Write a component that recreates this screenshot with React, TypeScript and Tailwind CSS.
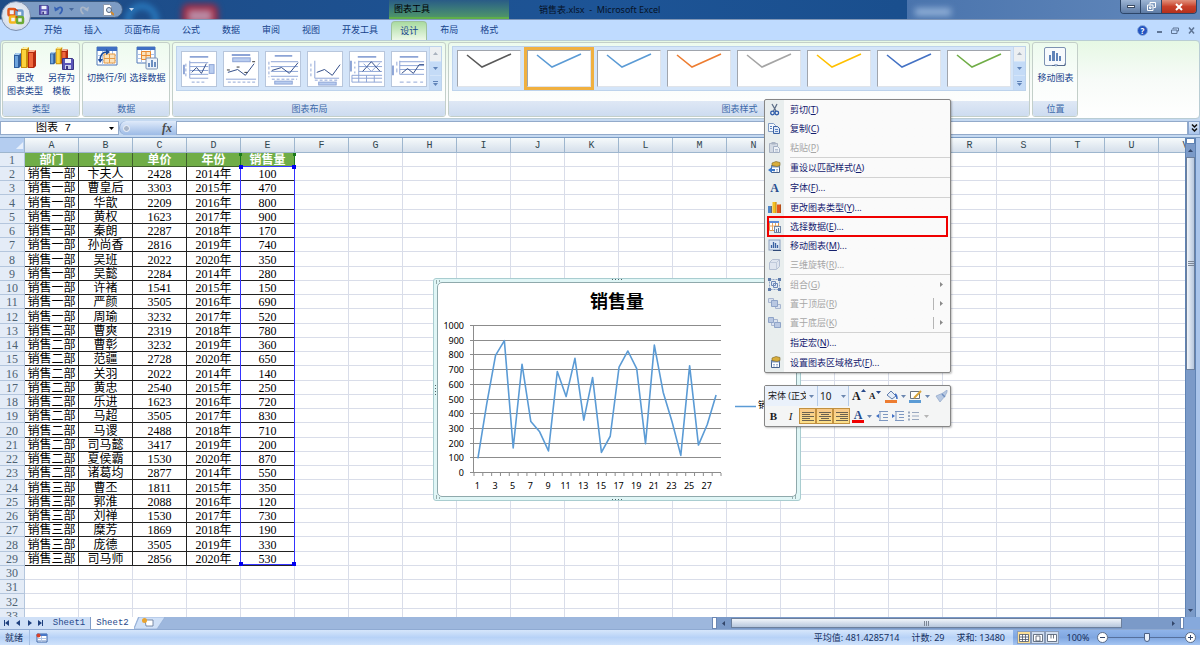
import { Fragment } from "react";
import type { ReactNode } from "react";

const uiFont = "font-['Noto_Sans','Noto_Sans_CJK_SC',sans-serif]";

const tabs = ["开始", "插入", "页面布局", "公式", "数据", "审阅", "视图", "开发工具", "设计", "布局", "格式"];

const columns = "ABCDEFGHIJKLMNOPQRSTUV".split("");

const header = ["部门", "姓名", "单价", "年份", "销售量"];

const records: [string, string, number, number, number][] = [
  ["销售一部", "卞夫人", 2428, 2014, 100],
  ["销售一部", "曹皇后", 3303, 2015, 470],
  ["销售一部", "华歆", 2209, 2016, 800],
  ["销售一部", "黄权", 1623, 2017, 900],
  ["销售一部", "秦朗", 2287, 2018, 170],
  ["销售一部", "孙尚香", 2816, 2019, 740],
  ["销售一部", "吴班", 2022, 2020, 350],
  ["销售一部", "吴懿", 2284, 2014, 280],
  ["销售一部", "许褚", 1541, 2015, 150],
  ["销售一部", "严颜", 3505, 2016, 690],
  ["销售一部", "周瑜", 3232, 2017, 520],
  ["销售二部", "曹爽", 2319, 2018, 780],
  ["销售二部", "曹彰", 3232, 2019, 360],
  ["销售二部", "范疆", 2728, 2020, 650],
  ["销售二部", "关羽", 2022, 2014, 140],
  ["销售二部", "黄忠", 2540, 2015, 250],
  ["销售二部", "乐进", 1623, 2016, 720],
  ["销售二部", "马超", 3505, 2017, 830],
  ["销售二部", "马谡", 2488, 2018, 710],
  ["销售二部", "司马懿", 3417, 2019, 200],
  ["销售二部", "夏侯霸", 1530, 2020, 870],
  ["销售二部", "诸葛均", 2877, 2014, 550],
  ["销售三部", "曹丕", 1811, 2015, 350],
  ["销售三部", "郭淮", 2088, 2016, 120],
  ["销售三部", "刘禅", 1530, 2017, 730],
  ["销售三部", "糜芳", 1869, 2018, 190],
  ["销售三部", "庞德", 3505, 2019, 330],
  ["销售三部", "司马师", 2856, 2020, 530],
];

const rowNumbers = Array.from({ length: 33 }, (_, i) => i + 1);

const styleColors = ["#595959", "#5b9bd5", "#5b9bd5", "#ed7d31", "#a5a5a5", "#ffc000", "#4472c4", "#70ad47"];

/* ---------- icons ---------- */

function BarsIcon({ className }: { className: string }) {
  return (
    <svg viewBox="0 0 22 24" className={className}>
      <path d="M0 9l2-2h5v13l-2 2H0z" fill="#2f5f9e" />
      <path d="M1 10h3v11H1z" fill="#6ea4dc" />
      <path d="M0 9l2-2h5L5 9z" fill="#a9cdf0" />
      <path d="M7 3l3-2h5v19l-2 2H7z" fill="#c98f0c" />
      <path d="M8 4h4v17H8z" fill="#fbd33c" />
      <path d="M7 3l3-2h5l-2 2z" fill="#fff0a0" />
      <path d="M14 6l2-2h6v16l-2 2h-6z" fill="#b32a10" />
      <path d="M15 7h4v14h-4z" fill="#f0683c" />
      <path d="M14 6l2-2h6l-2 2z" fill="#ffb190" />
    </svg>
  );
}

function FloppyIcon({ className }: { className: string }) {
  return (
    <svg viewBox="0 0 12 12" className={className}>
      <path d="M.5.5h10l1 1v10H.5z" fill="#5a55b8" stroke="#3b3684" />
      <path d="M3 1h6v4H3z" fill="#eef1fb" />
      <path d="M3 7h6v4H3z" fill="#c9cdea" />
      <path d="M4 8h2v3H4z" fill="#3b3684" />
    </svg>
  );
}

function SaveTemplateIcon({ className }: { className: string }) {
  return (
    <span className={`relative block ${className}`}>
      <BarsIcon className="h-5 w-[18px]" />
      <FloppyIcon className="absolute right-0 bottom-0 size-3" />
    </span>
  );
}

function GridSheet() {
  return (
    <>
      <path d="M1 1h20v18H1z" fill="#fff" stroke="#5078b8" />
      <path d="M1 1h20v4H1z" fill="#3f6fc4" />
      <path d="M1 9.500h20M1 14.500h20M6.500 5v14M11.500 5v14M16.500 5v14" stroke="#a9c2e8" />
    </>
  );
}

function SwitchIcon({ className }: { className: string }) {
  return (
    <svg viewBox="0 0 22 24" className={className}>
      <GridSheet />
      <path d="M8 8h11v9H8z" fill="#fbe3bd" stroke="#e59a45" />
      <path d="M8 12.500h11M13.500 8v9" stroke="#e59a45" />
      <path d="M4 15c0-6 2-9 7-9" fill="none" stroke="#1e4c9c" strokeWidth="1.500" />
      <path d="M2 13l2 4 3-4zM10 3l4 3-4 3z" fill="#1e4c9c" />
    </svg>
  );
}

function SelectDataIcon({ className }: { className: string }) {
  return (
    <svg viewBox="0 0 22 24" className={className}>
      <path d="M1 1h18v16H1z" fill="#fff" stroke="#5078b8" />
      <path d="M1 1h18v3H1z" fill="#3f6fc4" />
      <path d="M1 8.500h18M1 12.500h18M5.500 4v13M14.500 4v13" stroke="#a9c2e8" />
      <path d="M5.500 5.500h9v8h-9zM5.500 9.500h9M10 5.500v8" fill="#fbe3bd" stroke="#e98a30" />
      <rect x="10" y="12" width="11.500" height="11" rx="1" fill="#eef4fb" stroke="#7d92b2" />
      <path d="M12 17h2v4h-2zM15 14h2v7h-2zM18 16h2v5h-2z" fill="#6d8fc0" />
    </svg>
  );
}

function MoveChartIcon({ className }: { className: string }) {
  return (
    <svg viewBox="0 0 22 24" className={className}>
      <rect x=".5" y="1.500" width="21" height="18" rx="1.500" fill="#f7fafd" stroke="#7d92b2" />
      <path d="M5 9h2v6H5zM8 5h3v10H8zM12 7h2v8h-2zM15 10h2v5h-2z" fill="#5f83b8" />
      <path d="M8 19.500h13v-2" fill="none" stroke="#53698c" />
      <path d="M10 18l2 3 2-3" fill="#9db3d2" />
    </svg>
  );
}

function OfficeLogo() {
  return (
    <svg viewBox="0 0 20 20" className="size-5" fill="none" strokeWidth="2.500">
      <rect x="2.500" y="3" width="6.500" height="6.500" rx="1" stroke="#e2571c" />
      <rect x="10.500" y="4.500" width="6" height="6" rx="1" stroke="#6f9ccb" />
      <rect x="4" y="10.500" width="6" height="6" rx="1" stroke="#f5b61d" />
      <rect x="11" y="11" width="6" height="6" rx="1" stroke="#6caa35" />
      <path d="M9 3l3 2M9.500 11h2" stroke="#c43c12" strokeWidth="1.500" />
    </svg>
  );
}

function UndoIcon({ color, flip }: { color: string; flip?: boolean }) {
  return (
    <svg viewBox="0 0 10 10" className={flip ? "size-[10px] -scale-x-100" : "size-[10px]"}>
      <path d="M2.500 4.500C5 1 9 2 8 5.500 7.500 7.500 6.500 8.500 5.500 9" fill="none" stroke={color} strokeWidth="1.800" />
      <path d="M0 1.500l1 5 4-2z" fill={color} />
    </svg>
  );
}

function Caret({ className = "text-[#6b87b0]" }: { className?: string }) {
  return (
    <svg viewBox="0 0 5 3" className={`h-[3px] w-[5px] shrink-0 ${className}`}>
      <path d="M0 0h5L2.500 3z" fill="currentColor" />
    </svg>
  );
}

function PropertiesIcon({ arrow }: { arrow?: boolean }) {
  return (
    <>
      <path d="M3.500 4.500h8v7h-8z" fill="#fff" stroke="#47628c" />
      <path d="M3.500 4.500h8v2h-8z" fill="#7f9cc8" />
      <path d="M4 2l4-1.500 4 1v3l-3 1-5-1z" fill="#d9ae3c" stroke="#7a6424" strokeWidth=".600" />
      <path d="M5 8.500h2M8 8.500h2M5 10h2M8 10h2" stroke="#8aa2c6" strokeWidth=".800" />
      {arrow && <path d="M0 9l4-3v2h3v2H4v2z" fill="#3c78c8" />}
    </>
  );
}

const menuIcons: Record<string, ReactNode> = {
  cut: (
    <>
      <path d="M4 1l4 7M9 1L5.500 8" stroke="#5e6f88" strokeWidth="1.300" />
      <circle cx="4.500" cy="10" r="1.800" fill="none" stroke="#2c5aa8" strokeWidth="1.300" />
      <circle cx="8.800" cy="10" r="1.800" fill="none" stroke="#2c5aa8" strokeWidth="1.300" />
    </>
  ),
  copy: (
    <>
      <path d="M.5 1.500h5l2 2v6h-7z" fill="#f3f7fc" stroke="#7f9bc4" />
      <path d="M5.500 4.500h4l2 2v5h-6z" fill="#dfe9f7" stroke="#3a62a4" />
      <path d="M7 7.500h3M7 9.500h3M2 4.500h2M2 6.500h2" stroke="#5a82c0" />
    </>
  ),
  paste: (
    <>
      <path d="M1.500 2.500h8v9h-8z" fill="#d3dae4" stroke="#aab4c4" />
      <path d="M3.500 1h4v2.500h-4z" fill="#aab4c4" />
      <path d="M5.500 5.500h4l2 2v4h-6z" fill="#eef2f7" stroke="#a3b0c4" />
      <path d="M7 8.500h3M7 10h3" stroke="#b4c0d2" />
    </>
  ),
  reset: <PropertiesIcon arrow />,
  font: (
    <text x="6.500" y="10.500" textAnchor="middle" fontSize="12" fontWeight="bold" fontFamily="Liberation Serif" fill="#274f8f">
      A
    </text>
  ),
  bars: (
    <>
      <path d="M0 5h4v7H0z" fill="#4f86c8" />
      <path d="M4.500 1h4v11h-4z" fill="#f5bf22" />
      <path d="M9 3.500h4V12H9z" fill="#e2551f" />
      <path d="M3 5h1v7H3zM7.500 1h1v11h-1zM12 3.500h1V12h-1z" fill="#8a4a12" opacity=".5" />
    </>
  ),
  select: (
    <>
      <path d="M1.500 1.500h9v9h-9z" fill="#fff" stroke="#e0954c" />
      <path d="M1 1h10v2H1z" fill="#5a8ad8" />
      <path d="M1.500 6h9M4.500 3v8M7.500 3v8" stroke="#e9a663" />
      <rect x="6.500" y="6.500" width="6" height="6" fill="#e8eff8" stroke="#7186a6" />
      <path d="M8.500 9v3M10.500 8v4" stroke="#56739e" />
    </>
  ),
  move: (
    <>
      <rect x="1" y="1" width="11" height="10" fill="#dfe8f4" stroke="#8ba0c0" />
      <path d="M3.500 6v3M5.500 3v6M7.500 4v5M9.500 6v3" stroke="#3c62a2" strokeWidth="1.300" />
      <path d="M5 11.500h8" stroke="#2f4a78" />
    </>
  ),
  cube: (
    <>
      <path d="M1.500 4.500l3-3h7v7l-3 3h-7z" fill="#dfe5ef" stroke="#b4bfd3" />
      <path d="M1.500 4.500h7v7M8.500 4.500l3-3" fill="none" stroke="#c0cadb" />
    </>
  ),
  group: (
    <>
      <path d="M1.500 1.500h10v10h-10z" fill="none" stroke="#8fa4c6" strokeDasharray="2 1" />
      <path d="M3.500 3.500h4v4h-4zM5.500 5.500h4v4h-4z" fill="#e0e8f4" stroke="#6f8ab8" />
      <path d="M0 0h3v3H0zM10 0h3v3h-3zM0 10h3v3H0zM10 10h3v3h-3z" fill="#5f7cac" />
    </>
  ),
  front: (
    <>
      <path d="M.5 1.500h5v4h-5z" fill="#dbe3f0" stroke="#a8b6d0" />
      <path d="M7.500 7.500h5v4h-5z" fill="#dbe3f0" stroke="#a8b6d0" />
      <path d="M3.500 3.500h6v6h-6z" fill="#b9c8e2" stroke="#8fa4c8" />
    </>
  ),
  back: (
    <>
      <path d="M3.500 3.500h6v6h-6z" fill="#dbe3f0" stroke="#a8b6d0" />
      <path d="M.5 1.500h5v5h-5z" fill="#b9c8e2" stroke="#8fa4c8" />
      <path d="M6.500 6.500h6v5h-6z" fill="#b9c8e2" stroke="#8fa4c8" />
    </>
  ),
  format: <PropertiesIcon />,
};

type MenuItem = { text: string; accessKey: string; tail?: string; icon?: string; disabled?: boolean; sub?: boolean; split?: boolean; marked?: boolean };

const menuGroups: MenuItem[][] = [
  [
    { text: "剪切", accessKey: "T", icon: "cut" },
    { text: "复制", accessKey: "C", icon: "copy" },
    { text: "粘贴", accessKey: "P", icon: "paste", disabled: true },
  ],
  [{ text: "重设以匹配样式", accessKey: "A", icon: "reset" }],
  [{ text: "字体", accessKey: "F", tail: "...", icon: "font" }],
  [
    { text: "更改图表类型", accessKey: "Y", tail: "...", icon: "bars" },
    { text: "选择数据", accessKey: "E", tail: "...", icon: "select", marked: true },
    { text: "移动图表", accessKey: "M", tail: "...", icon: "move" },
    { text: "三维旋转", accessKey: "R", tail: "...", icon: "cube", disabled: true },
  ],
  [
    { text: "组合", accessKey: "G", icon: "group", disabled: true, sub: true },
    { text: "置于顶层", accessKey: "R", icon: "front", disabled: true, sub: true, split: true },
    { text: "置于底层", accessKey: "K", icon: "back", disabled: true, sub: true, split: true },
  ],
  [{ text: "指定宏", accessKey: "N", tail: "..." }],
  [{ text: "设置图表区域格式", accessKey: "F", tail: "...", icon: "format" }],
];

/* ---------- title bar and ribbon ---------- */

function TitleBar() {
  return (
    <header className="relative h-[19px] overflow-hidden bg-linear-to-r from-[#1d4b86] via-[#1d5496] to-[#174a86]">
      <span className="absolute top-1 left-[126px] size-8 rounded-full border-4 border-[#2f8fd8] blur-[3px]" />
      <span className="absolute top-1 left-[182px] h-6 w-9 rounded-md border-6 border-[#a02840] bg-[#b98aa4] blur-[3px]" />
      <span className="absolute inset-y-0 right-0 left-[907px] bg-linear-to-r from-[#4a74ad] to-[#6288bb]" />
      <span className="absolute top-2 left-[915px] h-2 w-9 bg-[#8faed6] blur-[3px]" />
      <div className="absolute top-px left-5 flex h-[17px] w-[103px] items-center gap-[5px] rounded-r-full border border-[#39587f] bg-[#7d9cc4] pl-[18px]">
        <button aria-label="保存"><FloppyIcon className="size-[10px]" /></button>
        <button aria-label="撤消"><UndoIcon color="#3561b4" /></button>
        <Caret className="text-[#496a9c]" />
        <button aria-label="恢复"><UndoIcon color="#a9b6c8" flip /></button>
        <button aria-label="打印预览" className="ml-2">
          <svg viewBox="0 0 12 12" className="size-3">
            <path d="M1.500.5h6l2 2v9h-8z" fill="#fff" stroke="#8c99ad" />
            <circle cx="7" cy="6" r="2.500" fill="#cfe0f4" stroke="#53657f" />
            <path d="M9 8l3 3" stroke="#d08a30" strokeWidth="2" />
          </svg>
        </button>
      </div>
      <span className="absolute top-2 left-[129px]"><Caret className="text-[#c8d8ee]" /></span>
      <div className="absolute inset-y-0 left-[389px] w-[120px] border-b-2 border-[#5fae4a] bg-linear-to-b from-[#2a5b86] to-[#4f9468] pl-[5px] text-[9px] leading-[17px] text-black">
        图表工具
      </div>
      <h1 className="absolute top-0 left-[539px] text-[9px] leading-5 whitespace-pre text-[#061226]">销售表.xlsx  -  Microsoft Excel</h1>
      <div className="absolute top-0 right-[3px] flex h-[14px] overflow-hidden rounded-b border border-t-0 border-[#2c4568]">
        <button aria-label="最小化" className="flex w-5 items-center justify-center border-r border-[#2c4568] bg-linear-to-b from-[#9db5d4] to-[#5d7ba5]">
          <span className="h-[3px] w-2 border border-[#3c4c62] bg-white" />
        </button>
        <button aria-label="还原" className="flex w-[21px] items-center justify-center border-r border-[#2c4568] bg-linear-to-b from-[#9db5d4] to-[#5d7ba5]">
          <svg viewBox="0 0 9 9" className="size-[9px]" fill="none" stroke="#fff">
            <path d="M3 2.500v-2h5.500v5h-2M.5 3h5.500v5.500H.5zM2.500 5h1.500v1.500H2.500z" />
          </svg>
        </button>
        <button aria-label="关闭" className="flex w-[34px] items-center justify-center bg-linear-to-b from-[#e0907c] via-[#c8402a] to-[#b5301c]">
          <svg viewBox="0 0 8 8" className="size-2" stroke="#fff" strokeWidth="2">
            <path d="M1 1l6 6M7 1L1 7" />
          </svg>
        </button>
      </div>
    </header>
  );
}

function TabStrip() {
  return (
    <nav className="relative flex h-[21px] items-stretch border-t border-[#8097b8] bg-[#bfdbff] pl-[33px] text-[9px] leading-[18px] text-[#15428b]">
      {tabs.map((tab) =>
        tab === "设计" ? (
          <button key={tab} className="mx-[2px] mt-px rounded-t border border-b-0 border-[#9fc19c] bg-linear-to-b from-[#a9dba0] to-[#edf8e8] px-2 leading-[16px]">
            {tab}
          </button>
        ) : (
          <button key={tab} className="px-[11px]">{tab}</button>
        ),
      )}
      <div className="mr-[5px] ml-auto flex items-center gap-[9px]">
        <button aria-label="帮助" className="size-[11px] rounded-full border border-[#8fb0e0] bg-[#2354c0] text-[8px] leading-[9px] font-bold text-white">?</button>
        <button aria-label="最小化窗口" className="mt-1 h-[2px] w-[5px] bg-[#5f7595]" />
        <button aria-label="还原窗口">
          <svg viewBox="0 0 8 7" className="h-[7px] w-2" fill="none" stroke="#5f7595">
            <path d="M2 2V1h5.500v3H6M.5 3H6v3.500H.5z" />
          </svg>
        </button>
        <button aria-label="关闭窗口">
          <svg viewBox="0 0 7 7" className="size-[7px]" stroke="#5f7595" strokeWidth="1.500">
            <path d="M1 .5l5 6M6 .5l-5 6" />
          </svg>
        </button>
      </div>
    </nav>
  );
}

function RibbonGroup({ label, children }: { label: string; children: ReactNode }) {
  return (
    <section className="flex flex-col overflow-hidden rounded-[3px] border border-[#c3cfc9] bg-linear-to-b from-[#edfbee] via-[#fafdfb] to-white">
      <div className="flex flex-1 items-start px-[3px] pt-[3px]">{children}</div>
      <h2 className="h-[15px] bg-linear-to-b from-[#dfe8f5] to-[#cddcf0] text-center text-[9px] leading-[15px] text-[#3e6aaa]">{label}</h2>
    </section>
  );
}

function RibbonButton({ lines, children }: { lines: string[]; children: ReactNode }) {
  return (
    <button className="flex flex-col items-center px-px text-[9px] leading-[13px] whitespace-nowrap text-[#15428b]">
      <span className="mb-px block">{children}</span>
      {lines.map((line) => (
        <span key={line}>{line}</span>
      ))}
    </button>
  );
}

function GalleryScroll() {
  const parts = ["上一行", "下一行", "更多"];
  return (
    <div className="flex w-3 flex-col gap-px border-l border-[#c5d8ef]">
      {parts.map((part, i) => (
        <button
          key={part}
          aria-label={part}
          className={`flex flex-1 flex-col items-center justify-center gap-px ${i === 0 ? "bg-[#eceff2]" : "bg-[#c4dbf7]"}`}
        >
          {i === 2 && <span className="h-px w-[5px] bg-[#5f83b8]" />}
          <span className={i === 0 ? "rotate-180" : ""}><Caret className={i === 0 ? "text-[#a9b2be]" : "text-[#5f83b8]"} /></span>
        </button>
      ))}
    </div>
  );
}

const layoutThumbs: ReactNode[] = [
  <>
    <path d="M8 5h19" strokeWidth="2" />
    <path d="M8 11h19M8 15h19M8 19h19M8 23h19M8 9v18h19" />
    <path d="M10 31h15M4 12v14" strokeDasharray="3 2" />
    <path d="M2 13v10" strokeWidth="2" />
    <rect x="28" y="13" width="5" height="9" fill="#b9cdf0" />
    <path d="M10 21l5-5 5 6 5-10" stroke="#2f4a86" />
  </>,
  <>
    <path d="M8 3h19" strokeWidth="2" />
    <rect x="9" y="6" width="18" height="4" fill="#b9cdf0" />
    <path d="M2 28h31" />
    <path d="M4 31h28" strokeDasharray="3 2" />
    <path d="M4 21l10-3 8 6 9-12" stroke="#2f4a86" />
    <path d="M3 18.500h3M13 15.500h3M21 21h3M29 10h3" stroke="#333" />
  </>,
  <>
    <path d="M9 4h18" strokeWidth="2" />
    <path d="M5 10h28M5 15h28M5 20h28M5 25h28" />
    <path d="M6 28h26M3 10v16" strokeDasharray="3 2" />
    <rect x="9" y="30" width="18" height="3" fill="#b9cdf0" />
    <path d="M6 19l10-3 8 6 9-11" stroke="#2f4a86" />
  </>,
  <>
    <path d="M7 9v18h25" />
    <path d="M7 29h25M3 12v14" strokeDasharray="3 2" />
    <rect x="11" y="31" width="18" height="3" fill="#b9cdf0" />
    <path d="M9 21l8-3 8 6 8-11" stroke="#2f4a86" />
  </>,
  <>
    <path d="M8 5h19" strokeWidth="2" />
    <path d="M9 10h24M9 15h24M9 20h24M2 24h31M2 27h31M2 31h31M9 9v22M17 24v7M25 24v7M2 24v7" />
    <path d="M1 9v11" strokeWidth="2" />
    <path d="M5 10v12" strokeDasharray="2 3" />
    <path d="M14 12l8 8 9-9" />
    <path d="M13 20l9-10 9 10" stroke="#2f4a86" />
  </>,
  <>
    <path d="M8 5h19" strokeWidth="2" />
    <path d="M8 10h25M8 14h25M8 18h25M8 23h25M8 9v14" />
    <path d="M1 14v10" strokeWidth="2" />
    <path d="M8 31h24M5 10v14" strokeDasharray="4 3" />
    <path d="M10 22l6-5 6 5 6-9h5" stroke="#2f4a86" />
  </>,
];

function Ribbon() {
  return (
    <div className="flex h-[79px] gap-[2px] rounded border border-[#b9cdd4] bg-linear-to-b from-[#e6f8e4] via-[#f7fbf8] to-white p-px">
      <RibbonGroup label="类型">
        <RibbonButton lines={["更改", "图表类型"]}><BarsIcon className="h-6 w-[22px]" /></RibbonButton>
        <div className="flex w-8 justify-end">
          <RibbonButton lines={["另存为", "模板"]}><SaveTemplateIcon className="h-6 w-6" /></RibbonButton>
        </div>
      </RibbonGroup>
      <RibbonGroup label="数据">
        <div className="flex gap-px">
          <RibbonButton lines={["切换行/列"]}><SwitchIcon className="h-6 w-[22px]" /></RibbonButton>
          <RibbonButton lines={["选择数据"]}><SelectDataIcon className="h-6 w-[22px]" /></RibbonButton>
        </div>
      </RibbonGroup>
      <RibbonGroup label="图表布局">
        <div className="flex h-[45px] border border-[#bdd3ec] bg-[#d4e5f9]">
          <div className="flex items-center gap-[6px] pr-[2px] pl-1">
            {layoutThumbs.map((thumb, i) => (
              <button key={i} aria-label={`布局 ${i + 1}`} className="border border-[#b7c6dc] bg-white">
                <svg viewBox="0 0 35 35" className="size-[34px]" fill="none" stroke="#8da4d6" strokeWidth="1">
                  {thumb}
                </svg>
              </button>
            ))}
          </div>
          <GalleryScroll />
        </div>
      </RibbonGroup>
      <RibbonGroup label="图表样式">
        <div className="flex h-[45px] border border-[#bdd3ec] bg-[#d4e5f9]">
          <div className="flex items-center gap-[6px] pr-[2px] pl-1">
            {styleColors.map((color, i) => (
              <button
                key={i}
                aria-label={`样式 ${i + 1}`}
                className={`h-[37px] w-16 border border-r-[#e0e4ea] border-b-[#e0e4ea] border-[#a0a5ad] bg-white ${i === 1 ? "outline-3 outline-[#f0b040]" : ""}`}
              >
                <svg viewBox="0 0 62 35" className="h-[35px] w-full" fill="none" stroke={color} strokeWidth="1.600">
                  <path d="M9 4l15 12 29-13" />
                </svg>
              </button>
            ))}
          </div>
          <GalleryScroll />
        </div>
      </RibbonGroup>
      <RibbonGroup label="位置">
        <RibbonButton lines={["移动图表"]}><MoveChartIcon className="h-6 w-[22px]" /></RibbonButton>
      </RibbonGroup>
    </div>
  );
}

function FormulaBar() {
  return (
    <div className="flex h-[19px] items-stretch border-b border-[#7c9cc4] bg-[#c5d9f1] pt-[2px] pb-[2px]">
      <div className="flex w-[119px] items-center border border-[#93aaca] bg-white">
        <input
          aria-label="名称框"
          defaultValue="图表 7"
          className="w-[108px] pl-[35px] font-['Liberation_Mono','Noto_Sans_CJK_SC',monospace] text-[11px] leading-3 text-black outline-none"
        />
        <Caret className="text-black" />
      </div>
      <div className="flex w-[57px] items-center justify-between rounded-l-full border-l border-[#8aa6d0] bg-linear-to-b from-[#dfeafa] to-[#9dbbe6] pr-1 pl-[3px]">
        <span className="size-[7px] rounded-full border border-[#f2f6fc] bg-[#a9b6ca]" />
        <button aria-label="插入函数" className="font-['Liberation_Serif',serif] text-[12px] leading-3 font-bold text-[#4a4a4a] italic">fx</button>
      </div>
      <input aria-label="编辑栏" className="min-w-0 flex-1 border border-[#93aaca] bg-white text-[11px] outline-none" />
      <button aria-label="展开编辑栏" className="flex w-3 flex-col items-center justify-center border border-[#8aa6d0] bg-linear-to-b from-[#dfeafa] to-[#a9c4ea]">
        <svg viewBox="0 0 7 8" className="h-2 w-[7px]" fill="none" stroke="#111" strokeWidth="1.500">
          <path d="M1 .5l2.500 2.500L6 .5M1 4.500L3.500 7 6 4.500" />
        </svg>
      </button>
    </div>
  );
}

/* ---------- worksheet ---------- */

function cellText(row: number, col: number) {
  if (row === 1) return header[col];
  const record = records[row - 2];
  if (!record) return "";
  return col === 3 ? `${record[3]}年` : record[col];
}

function SheetTable() {
  return (
    <table className="w-[1213px] table-fixed border-separate border-spacing-0 text-center font-['Liberation_Serif','Noto_Sans_CJK_SC',serif] text-[12px] leading-[12px]">
      <colgroup>
        <col className="w-[25px]" />
        {columns.map((c) => (
          <col key={c} className="w-[54px]" />
        ))}
      </colgroup>
      <thead>
        <tr className="h-[15px]">
          <th aria-label="全选" className="border-r border-b border-[#9eb6ce] bg-[#b4cdf0] p-0">
            <svg viewBox="0 0 10 10" className="ml-auto size-[9px]"><path d="M9 1v8H1z" fill="#e6effb" /></svg>
          </th>
          {columns.map((c) => (
            <th key={c} className="border-r border-b border-[#9eb6ce] bg-linear-to-b from-[#f6fafb] to-[#d5dfeb] p-0 pt-px font-['Liberation_Mono',monospace] text-[10px] font-normal text-[#33474f]">
              {c}
            </th>
          ))}
        </tr>
      </thead>
      <tbody>
        {rowNumbers.map((n) => (
          <tr key={n} className="h-[14px] nth-[4n]:h-[15px]">
            <th className="border-r border-b border-[#b4c6dd] bg-[#e4ecf7] p-0 pt-px font-normal text-[#4d6273]">{n}</th>
            {columns.map((c, i) => {
              if (i > 4 || n > 29) return <td key={c} className="border-r border-b border-[#d9dde9] p-0" />;
              if (n === 1)
                return (
                  <td key={c} className="border-r border-b border-[#3f5f2c] bg-[#70ad47] p-0 pt-px font-bold text-white">
                    {cellText(n, i)}
                  </td>
                );
              return <td key={c} className="border-r border-b border-[#222] p-0 pt-px whitespace-nowrap text-black">{cellText(n, i)}</td>;
            })}
          </tr>
        ))}
      </tbody>
    </table>
  );
}

function RangeMarker() {
  return (
    <div className="pointer-events-none absolute top-[28px] left-[240px] h-[399px] w-[55px] border border-[#3434ff]">
      <span className="absolute -top-[2px] -left-[2px] size-1 bg-[#0000f0]" />
      <span className="absolute -top-[2px] -right-[2px] size-1 bg-[#0000f0]" />
      <span className="absolute -bottom-[2px] -left-[2px] size-1 bg-[#0000f0]" />
      <span className="absolute -right-[2px] -bottom-[2px] size-1 bg-[#0000f0]" />
      <span className="absolute -top-[14px] -left-px h-3 w-px bg-[#1a7a1a]" />
      <span className="absolute -top-[14px] -right-px h-3 w-px bg-[#1a7a1a]" />
      <span className="absolute -top-[14px] -left-[2px] size-[3px] bg-[#1a7a1a]" />
      <span className="absolute -top-[14px] -right-[2px] size-[3px] bg-[#1a7a1a]" />
    </div>
  );
}

function SalesChart() {
  const left = 41;
  const right = 288;
  const base = 195;
  const top = 48;
  const step = (right - left) / records.length;
  const y = (value: number) => base - ((base - top) * value) / 1000;
  const points = records.map((r, i) => `${left + step * (i + 0.5) - 0.5},${y(r[4])}`).join(" ");

  return (
    <figure className="absolute top-[140px] left-[433px] h-[223px] w-[368px] rounded-[3px] border border-[#a9cdd0] bg-[#e0f6f6] p-[3px]">
      <div className="h-full rounded-[5px] border border-[#8fa9ac] bg-white" />
      <svg viewBox="0 0 368 223" className="absolute -top-px -left-px h-[223px] w-[368px] font-['Noto_Sans','Noto_Sans_CJK_SC',sans-serif]" fontSize="9">
        <text x="184" y="30" textAnchor="middle" fontSize="18" fontWeight="bold">销售量</text>
        {Array.from({ length: 11 }, (_, i) => i * 100).map((v) => (
          <Fragment key={v}>
            <path d={`M${left - 4} ${Math.round(y(v)) - 0.5}H${right}`} stroke="#8c8c8c" />
            <text x="31" y={y(v) + 3} textAnchor="end">{v}</text>
          </Fragment>
        ))}
        <path d={`M${left - 0.5} ${top}V${base}`} stroke="#8c8c8c" />
        {Array.from({ length: 29 }, (_, i) => (
          <path key={i} d={`M${left + step * i} ${base}v3`} stroke="#8c8c8c" />
        ))}
        {records.map((_, i) =>
          i % 2 === 0 ? (
            <text key={i} x={left + step * (i + 0.5) - 1} y="211" textAnchor="middle">{i + 1}</text>
          ) : null,
        )}
        <polyline points={points} fill="none" stroke="#5b9bd5" strokeWidth="1.600" strokeLinejoin="round" />
        <path d="M302 128.500h21" stroke="#5b9bd5" strokeWidth="1.500" />
        <text x="325" y="130">销售量</text>
        <g stroke="#4f6466" strokeDasharray="1 2">
          <path d="M179 1.500h11M179 221.500h11M2.500 107v11M3 3h6M3 5h3M3 220h6M3 218h3M359 220h6M362 218h3" />
        </g>
      </svg>
    </figure>
  );
}

function VerticalScroll() {
  return (
    <div className="absolute inset-y-0 right-0 flex w-[15px] bg-[#a9c4ea] pr-1">
      <div className="flex flex-1 flex-col items-center border-x border-[#5f83b4] bg-[#7b9ac8]">
        <span className="h-[6px] w-full border border-[#5f83b4] bg-white" />
        <button aria-label="向上滚动" className="flex h-[13px] w-full rotate-180 items-center justify-center"><Caret className="text-[#33466a]" /></button>
        <span className="flex h-[213px] w-full flex-col items-center justify-center gap-px border border-[#6c7f9c] bg-linear-to-r from-[#f1f5fa] to-[#b7c7dd]">
          <span className="h-px w-[6px] bg-[#7d8796]" />
          <span className="h-px w-[6px] bg-[#7d8796]" />
          <span className="h-px w-[6px] bg-[#7d8796]" />
        </span>
        <button aria-label="向下滚动" className="mt-auto flex h-[14px] w-full items-center justify-center"><Caret className="text-[#33466a]" /></button>
      </div>
    </div>
  );
}

function SheetTabs() {
  return (
    <div className="flex h-3 items-stretch bg-[#9db7dd] text-[#27498b]">
      <div className="flex w-12 items-center justify-around bg-[#cfe0f7] px-1">
        <svg viewBox="0 0 40 6" className="h-[6px] w-10" fill="#1f417f">
          <path d="M0 0h1v6H0zM5 0v6L1 3zM16 0v6l-4-3zM24 0v6l4-3zM34 0v6l4-3zM38 0h1v6h-1z" />
        </svg>
      </div>
      <button className="w-[43px] border-r border-[#7f9cc8] bg-[#cfe0f7] font-['Liberation_Mono',monospace] text-[9px] leading-3">Sheet1</button>
      <button className="w-[43px] bg-white font-['Liberation_Mono',monospace] text-[9px] leading-3">Sheet2</button>
      <button aria-label="插入工作表">
        <svg viewBox="0 0 32 12" className="h-3 w-8">
          <path d="M0 0h4L0 10z" fill="#fff" />
          <path d="M0 12L5 0h26l-8 12z" fill="#cfe0f7" stroke="#8faad2" strokeWidth=".700" />
          <path d="M11 3h8v6h-7z" fill="#fff" stroke="#5f7595" strokeWidth=".800" />
          <circle cx="10.500" cy="3.500" r="2.500" fill="#e9a430" />
        </svg>
      </button>
      <div className="ml-auto flex w-[40.700%] items-center bg-[#7b9ac8]">
        <span className="h-full w-[5px] border border-[#6c88b4] bg-white" />
        <button aria-label="向左滚动" className="mx-1 rotate-90"><Caret className="text-[#33466a]" /></button>
        <div className="h-full flex-1 p-px">
          <div className="flex h-full w-[90%] items-center justify-center gap-px border border-[#6c7f9c] bg-linear-to-b from-[#f1f5fa] to-[#b7c7dd]">
            <span className="h-[5px] w-px bg-[#7d8796]" />
            <span className="h-[5px] w-px bg-[#7d8796]" />
            <span className="h-[5px] w-px bg-[#7d8796]" />
          </div>
        </div>
        <button aria-label="向右滚动" className="mx-1 -rotate-90"><Caret className="text-[#33466a]" /></button>
        <span className="h-full w-1 border border-[#6c88b4] bg-white" />
        <span className="h-full w-4 bg-[#86a9dc]" />
      </div>
    </div>
  );
}

function StatusBar() {
  const views = ["普通", "页面布局", "分页预览"];
  return (
    <footer className="flex h-4 items-center border-t border-[#8faad2] bg-linear-to-b from-[#d6e6fb] via-[#b7d2f7] to-[#cfe2fb] text-[9px] leading-[15px] text-[#15305f]">
      <span className="w-[30px] border-r border-[#a3bde2] pl-[5px]">就绪</span>
      <button aria-label="录制宏" className="ml-[6px]">
        <svg viewBox="0 0 12 10" className="h-[10px] w-3">
          <path d="M1 1h10v8H1z" fill="#fff" stroke="#3a62a4" />
          <path d="M1 1h10v2H1z" fill="#4878c8" />
          <path d="M2 5.500h8M2 7.500h8M5.500 3v6" stroke="#b0c4e4" />
          <circle cx="2.500" cy="2.500" r="2" fill="#d8402a" />
        </svg>
      </button>
      <div className="ml-auto flex gap-3 pr-2">
        <span>平均值: 481.4285714</span>
        <span>计数: 29</span>
        <span>求和: 13480</span>
      </div>
      <div className="flex h-full items-center bg-linear-to-b from-[#8fb4ea] via-[#7fa6e0] to-[#a5c5f2] pr-1 pl-1">
        <div className="flex">
          {views.map((view, i) => (
            <button key={view} aria-label={view} className={`flex h-[13px] w-[14px] items-center justify-center border border-[#8a9cb8] ${i === 0 ? "bg-[#fcdf95]" : "bg-[#cfdcee]"}`}>
              <svg viewBox="0 0 10 8" className="h-2 w-[10px]" fill="#fff" stroke="#4a5568" strokeWidth=".800">
                {i === 0 && <path d="M.5.5h9v7h-9zM.5 3h9M.5 5.500h9M3.500.5v7M6.500.5v7" />}
                {i === 1 && <path d="M.5.5h9v7h-9zM3 2h4v5H3z" />}
                {i === 2 && <path d="M.5.5h9v7h-9zM4 .5v4M6.500.5v4" />}
              </svg>
            </button>
          ))}
        </div>
        <button className="w-[38px] text-center">100%</button>
        <button aria-label="缩小" className="flex size-[11px] items-center justify-center rounded-full border border-[#5a6c88] bg-white">
          <span className="h-px w-[5px] bg-[#33466a]" />
        </button>
        <input
          type="range"
          aria-label="显示比例"
          min={0}
          max={100}
          defaultValue={50}
          className="h-3 w-[77px] appearance-none bg-[linear-gradient(#56709c,#56709c)] bg-[length:100%_1px] bg-center bg-no-repeat [&::-webkit-slider-thumb]:h-[9px] [&::-webkit-slider-thumb]:w-[6px] [&::-webkit-slider-thumb]:appearance-none [&::-webkit-slider-thumb]:rounded-b-[3px] [&::-webkit-slider-thumb]:border [&::-webkit-slider-thumb]:border-[#4a5f84] [&::-webkit-slider-thumb]:bg-[#e9f0fa]"
        />
        <button aria-label="放大" className="flex size-[11px] items-center justify-center rounded-full border border-[#5a6c88] bg-white">
          <svg viewBox="0 0 5 5" className="size-[5px]" stroke="#33466a"><path d="M0 2.500h5M2.500 0v5" /></svg>
        </button>
      </div>
    </footer>
  );
}

/* ---------- floating menus ---------- */

function ContextMenu() {
  return (
    <div role="menu" className="absolute top-[99px] left-[764px] w-[187px] rounded-[2px] border border-[#868686] bg-linear-to-r from-[#e9eeee] from-[19px] to-[#fafafa] to-[19px] text-[9px] shadow-[1px_1px_2px_rgba(0,0,0,0.25)]">
      {menuGroups.map((group, g) => (
        <Fragment key={g}>
          {g > 0 && <div className="ml-[25px] h-px bg-[#d2d2d2]" />}
          {group.map((item) => (
            <button
              key={item.text}
              role="menuitem"
              disabled={item.disabled}
              className={`relative flex h-[19px] w-full items-center pl-[3px] text-left ${item.disabled ? "text-[#a7a7a7]" : "text-[#14206e]"}`}
            >
              <svg viewBox="0 0 13 13" className="mr-[9px] size-[13px] shrink-0" fill="none">
                {item.icon && menuIcons[item.icon]}
              </svg>
              <span>
                {item.text}(<u>{item.accessKey}</u>){item.tail}
              </span>
              {item.sub && (
                <span className={`mr-[6px] ml-auto flex h-3 items-center pl-[5px] ${item.split ? "border-l border-[#b5b5b5]" : ""}`}>
                  <span className="-rotate-90"><Caret className="text-[#8a8a8a]" /></span>
                </span>
              )}
              {item.marked && <span className="absolute inset-y-0 right-[3px] left-[3px] outline-2 -outline-offset-1 outline-[#f00000]" />}
            </button>
          ))}
        </Fragment>
      ))}
    </div>
  );
}

function AlignIcon({ d }: { d: string }) {
  return (
    <svg viewBox="0 0 12 9" className="h-[9px] w-3" stroke="#6b6250">
      <path d={d} />
    </svg>
  );
}

function MiniToolbar() {
  const serif = "font-['Liberation_Serif',serif] font-bold";
  const aligns = [
    { label: "左对齐", d: "M0 .5h12M0 2.500h8M0 4.500h12M0 6.500h8M0 8.500h12" },
    { label: "居中", d: "M0 .5h12M2 2.500h8M0 4.500h12M2 6.500h8M0 8.500h12" },
    { label: "右对齐", d: "M0 .5h12M4 2.500h8M0 4.500h12M4 6.500h8M0 8.500h12" },
  ];
  return (
    <div className="absolute top-[385px] left-[764px] w-[187px] rounded-[2px] border border-[#868686] bg-[#f4f5f5] text-[9px] text-[#1a1a1a] shadow-[1px_1px_2px_rgba(0,0,0,0.25)]">
      <div className="flex h-5 items-center">
        <label className="flex h-full w-[53px] items-center border-r border-[#b5cbe8] bg-[#eaf1fb] pl-[3px]">
          <select aria-label="字体" className="w-[38px] appearance-none overflow-hidden whitespace-nowrap outline-none">
            <option>宋体 (正文)</option>
          </select>
          <span className="ml-[3px]"><Caret /></span>
        </label>
        <label className="flex h-full w-[31px] items-center border-r border-[#b5cbe8] bg-[#eaf1fb] pl-[2px]">
          <select aria-label="字号" className="w-[21px] appearance-none text-[10px] outline-none">
            <option>10</option>
          </select>
          <Caret />
        </label>
        <button aria-label="增大字号" className={`${serif} ml-[3px] flex w-[15px] items-start text-[12px] leading-4`}>
          A<span className="mt-px rotate-180"><Caret className="text-[#27498b]" /></span>
        </button>
        <button aria-label="减小字号" className={`${serif} mr-[2px] ml-[2px] flex w-[14px] items-end text-[9px] leading-3`}>
          A<span className="mb-2"><Caret className="text-[#27498b]" /></span>
        </button>
        <button aria-label="填充颜色">
          <svg viewBox="0 0 13 13" className="size-[13px]">
            <path d="M2 5l4-4 5 5-4 3z" fill="#e6edf7" stroke="#5f7cac" />
            <path d="M10 4c2 1 2 3 2 5" stroke="#3f6fc4" fill="none" strokeWidth="1.500" />
            <path d="M0 10h12v3H0z" fill="#ed7d31" />
          </svg>
        </button>
        <span className="mx-[3px]"><Caret /></span>
        <button aria-label="轮廓颜色">
          <svg viewBox="0 0 13 13" className="size-[13px]">
            <path d="M1.500 1.500h9v7h-9z" fill="#fff" stroke="#6c7480" />
            <path d="M5 8l7-7" stroke="#d8a43a" strokeWidth="2" />
            <path d="M0 10h12v3H0z" fill="#5b9bd5" />
          </svg>
        </button>
        <span className="mx-[3px]"><Caret /></span>
        <button aria-label="格式刷" className="ml-[2px]">
          <svg viewBox="0 0 13 13" className="size-[13px]">
            <path d="M12 0L8 3 1 6l4 6 5-6 2-4z" fill="#b8c9e2" stroke="#8fa6c8" strokeWidth=".700" />
            <path d="M7 4l3 3" stroke="#6f8fc0" strokeWidth="1.500" />
          </svg>
        </button>
      </div>
      <div className="flex h-5 items-center">
        <button aria-label="加粗" className={`${serif} w-[17px] text-[11px]`}>B</button>
        <button aria-label="倾斜" className="w-[17px] font-['Liberation_Serif',serif] text-[11px] italic">I</button>
        {aligns.map((align) => (
          <button key={align.label} aria-label={align.label} className="flex h-4 w-[17px] items-center justify-center border border-[#c29141] bg-linear-to-b from-[#f8c888] to-[#fbe08a]">
            <AlignIcon d={align.d} />
          </button>
        ))}
        <button aria-label="字体颜色" className={`${serif} ml-[2px] h-[14px] w-3 border-b-3 border-[#f00000] text-[12px] leading-3 text-[#27498b]`}>A</button>
        <span className="mr-1 ml-[3px]"><Caret /></span>
        <div className="flex items-center gap-1">
          <button aria-label="减少缩进">
            <svg viewBox="0 0 12 10" className="h-[10px] w-3" stroke="#7d97c0">
              <path d="M3 .5h9M7 3.500h5M7 6.500h5M3 9.500h9M4 0v10" />
              <path d="M0 5l3-2v4z" fill="#3f6fc4" stroke="none" />
            </svg>
          </button>
          <button aria-label="增加缩进">
            <svg viewBox="0 0 12 10" className="h-[10px] w-3" stroke="#7d97c0">
              <path d="M3 .5h9M7 3.500h5M7 6.500h5M3 9.500h9M4 0v10" />
              <path d="M3 5L0 3v4z" fill="#3f6fc4" stroke="none" />
            </svg>
          </button>
          <button aria-label="项目符号">
            <svg viewBox="0 0 12 10" className="h-[10px] w-3" stroke="#9aa9c0">
              <path d="M0 1.500h2M0 5h2M0 8.500h2" strokeWidth="2" />
              <path d="M4 1.500h7M4 5h7M4 8.500h7" />
            </svg>
          </button>
          <Caret className="text-[#b5b5b5]" />
        </div>
      </div>
    </div>
  );
}

export default function App() {
  return (
    <div className={`relative flex h-screen flex-col overflow-hidden bg-[#c5d9f1] ${uiFont}`}>
      <TitleBar />
      <TabStrip />
      <Ribbon />
      <FormulaBar />
      <main className="relative min-h-0 flex-1 overflow-hidden bg-white">
        <SheetTable />
        <RangeMarker />
        <SalesChart />
        <VerticalScroll />
      </main>
      <SheetTabs />
      <StatusBar />
      <button aria-label="Office 按钮" className="absolute top-px left-px flex size-[30px] items-center justify-center rounded-full border border-[#7c8fae] bg-radial from-white to-[#c3cfe2]">
        <OfficeLogo />
      </button>
      <ContextMenu />
      <MiniToolbar />
    </div>
  );
}
